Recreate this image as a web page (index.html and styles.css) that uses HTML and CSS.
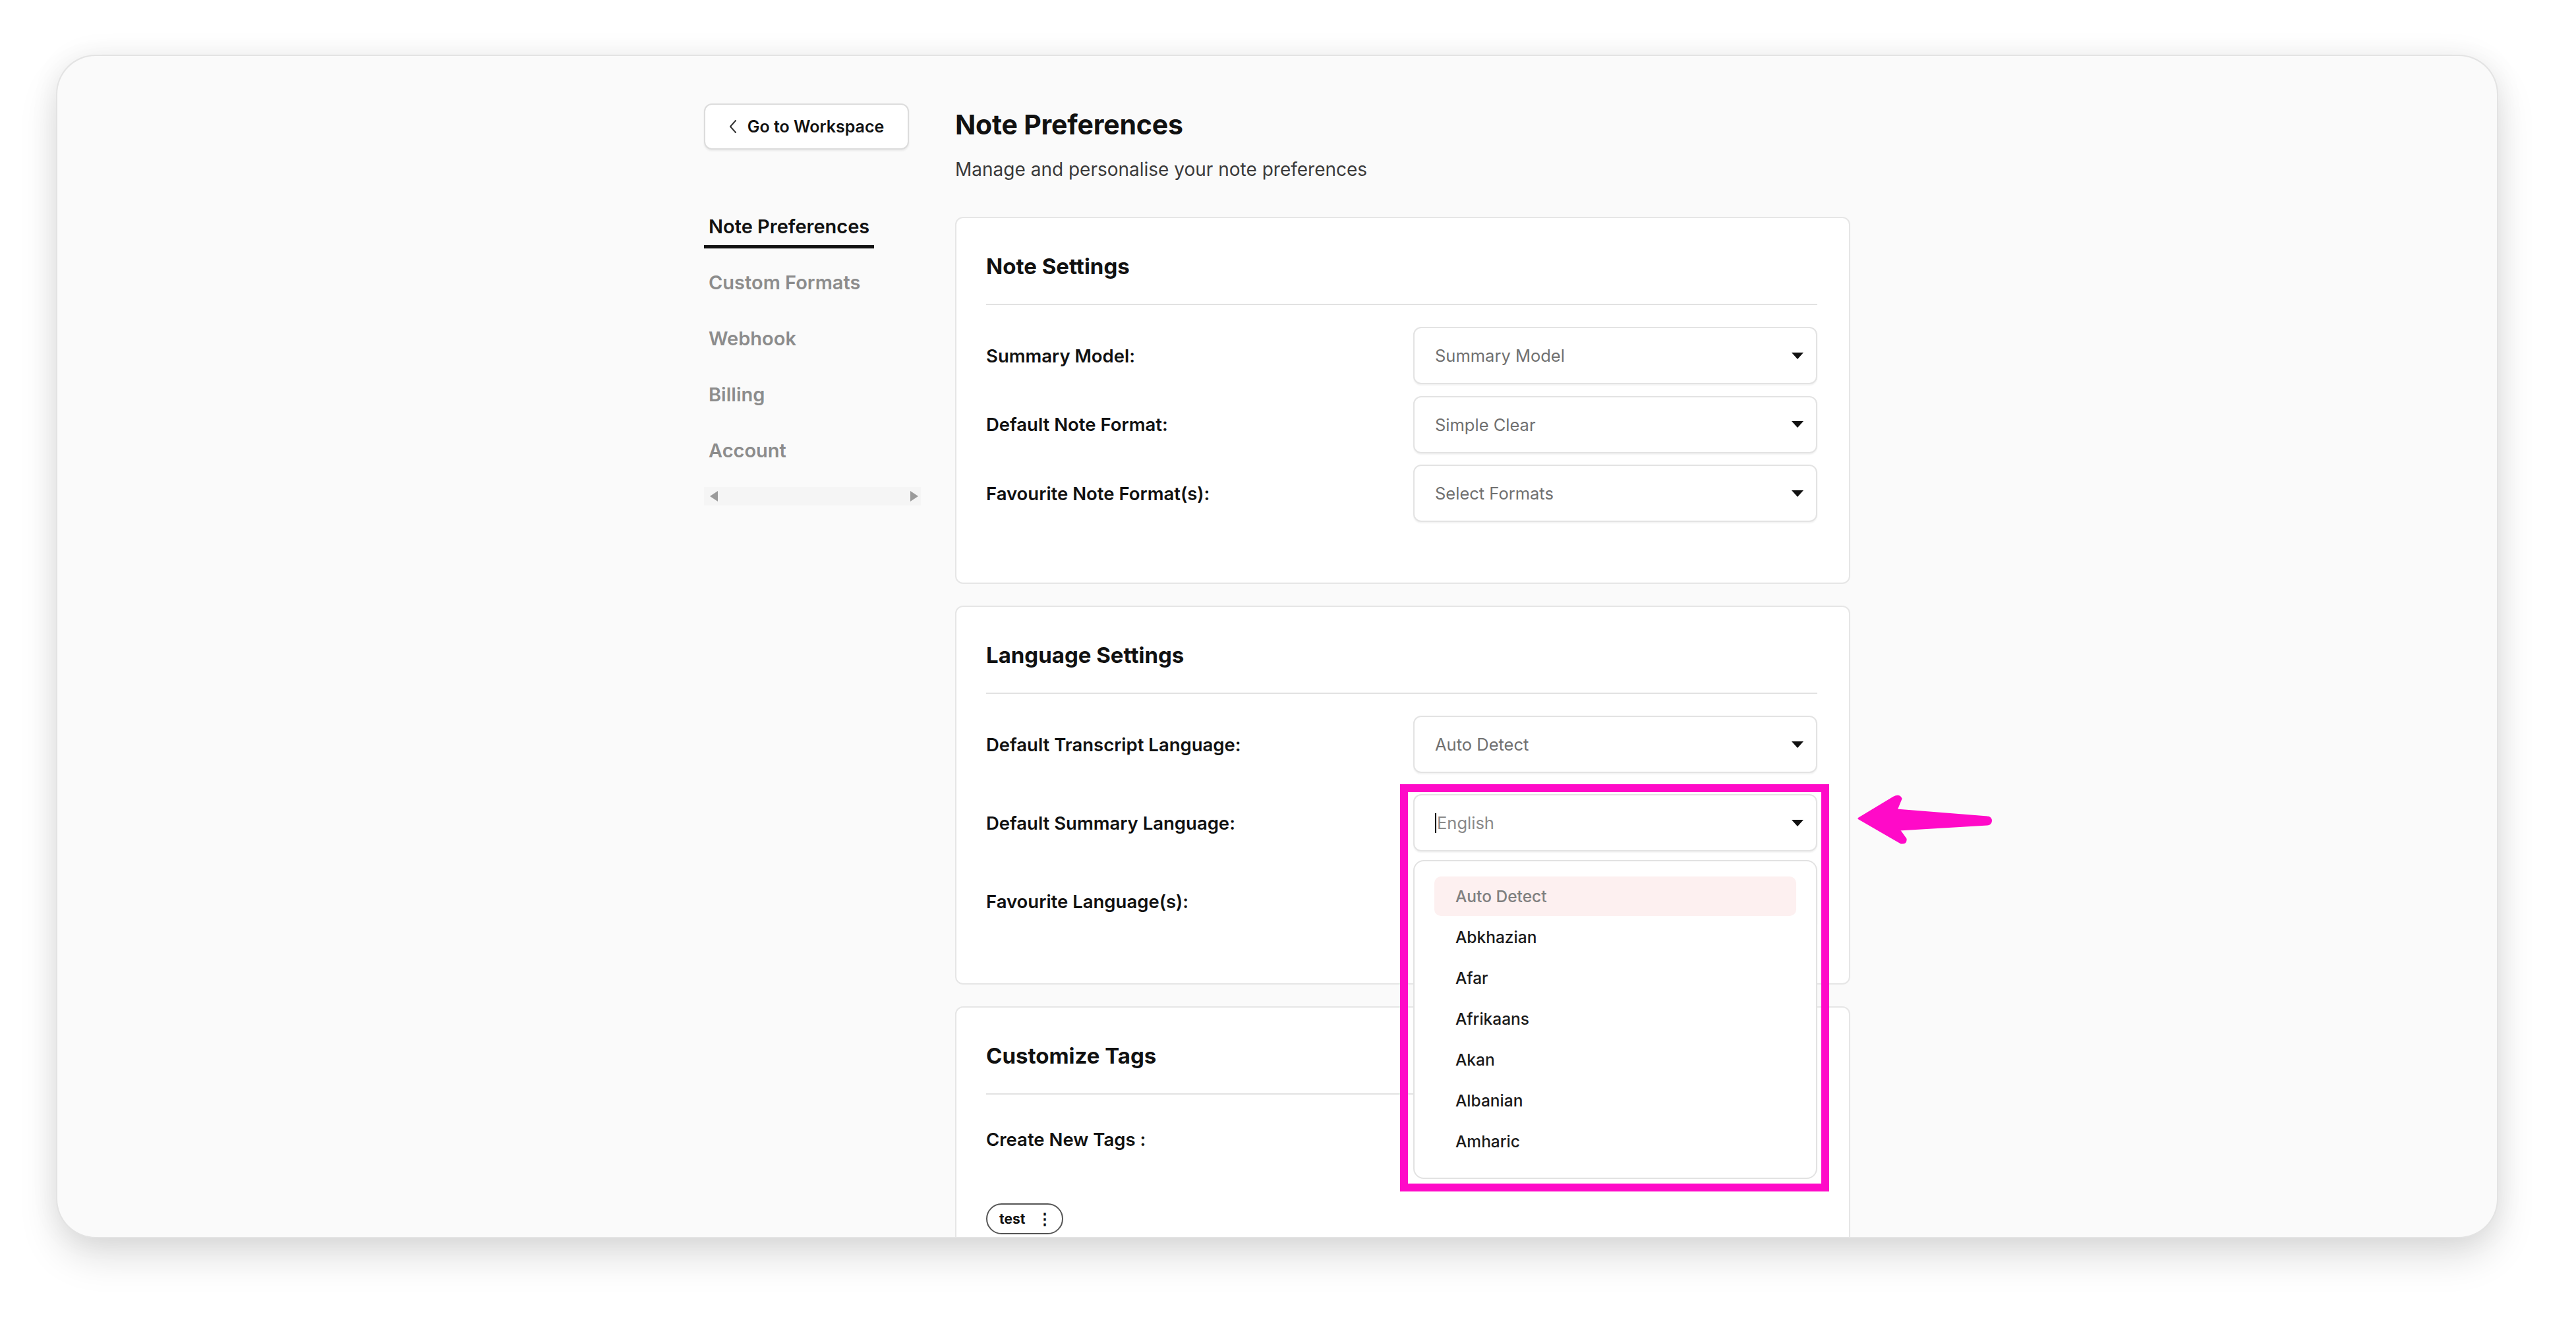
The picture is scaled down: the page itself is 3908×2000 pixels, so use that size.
FILE: index.html
```html
<!DOCTYPE html>
<html lang="en">
<head>
<meta charset="utf-8">
<title>Note Preferences</title>
<link rel="stylesheet" href="styles.css">
</head>
<body>
<div class="frame">
  <div class="app">
    <aside class="sidebar">
      <button class="back" type="button">
        <svg class="back-icon" viewBox="0 0 12 22" width="12" height="22"><polyline points="10,2 2,11 10,20" fill="none" stroke="#333" stroke-width="2" stroke-linecap="round" stroke-linejoin="round"/></svg>
        <span>Go to Workspace</span>
      </button>
      <nav class="nav">
        <a class="nav-item active">Note Preferences</a>
        <a class="nav-item">Custom Formats</a>
        <a class="nav-item">Webhook</a>
        <a class="nav-item">Billing</a>
        <a class="nav-item">Account</a>
      </nav>
      <div class="nav-scroll">
        <span class="tri tri-left"></span>
        <span class="tri tri-right"></span>
      </div>
    </aside>

    <main class="main">
      <h1 class="title">Note Preferences</h1>
      <p class="subtitle">Manage and personalise your note preferences</p>

      <section class="card card-notes">
        <h2 class="card-title">Note Settings</h2>
        <hr class="divider">
        <div class="rows rows-tight">
          <div class="row">
            <span class="label">Summary Model:</span>
            <div class="select-wrap"><div class="select"><span>Summary Model</span><span class="caret"></span></div></div>
          </div>
          <div class="row">
            <span class="label">Default Note Format:</span>
            <div class="select-wrap"><div class="select"><span>Simple Clear</span><span class="caret"></span></div></div>
          </div>
          <div class="row">
            <span class="label">Favourite Note Format(s):</span>
            <div class="select-wrap"><div class="select"><span>Select Formats</span><span class="caret"></span></div></div>
          </div>
        </div>
      </section>

      <section class="card card-lang">
        <h2 class="card-title">Language Settings</h2>
        <hr class="divider">
        <div class="rows rows-loose">
          <div class="row">
            <span class="label">Default Transcript Language:</span>
            <div class="select-wrap"><div class="select"><span>Auto Detect</span><span class="caret"></span></div></div>
          </div>
          <div class="row">
            <span class="label">Default Summary Language:</span>
            <div class="select-wrap">
              <div class="select select-open"><span><span class="cursor"></span>English</span><span class="caret"></span></div>
              <ul class="dropdown">
                <li class="opt opt-active">Auto Detect</li>
                <li class="opt">Abkhazian</li>
                <li class="opt">Afar</li>
                <li class="opt">Afrikaans</li>
                <li class="opt">Akan</li>
                <li class="opt">Albanian</li>
                <li class="opt">Amharic</li>
              </ul>
              <div class="highlight"></div>
              <svg class="pointer" viewBox="0 0 215 90" width="215" height="90">
                <path d="M7,43 L60,11 Q68,7 71,13 L64,30 L202,41 A5.5,5.5 0 0 1 202,52 L68,60 L78,74 Q79,81 71,80 Z" fill="#ff0ac8" stroke="#ff0ac8" stroke-width="3" stroke-linejoin="round"/>
              </svg>
            </div>
          </div>
          <div class="row">
            <span class="label">Favourite Language(s):</span>
            <div class="select-wrap"><div class="select"><span></span><span class="caret"></span></div></div>
          </div>
        </div>
      </section>

      <section class="card card-tags">
        <h2 class="card-title">Customize Tags</h2>
        <hr class="divider">
        <div class="tag-label">Create New Tags :</div>
        <div class="tags">
          <span class="tag"><span class="tag-text">test</span><span class="tag-more">&#8942;</span></span>
        </div>
      </section>
    </main>
  </div>
</div>
</body>
</html>
```

FILE: styles.css
```css
* {
  box-sizing: border-box;
}

html,
body {
  margin: 0;
  background: #ffffff;
}

body {
  width: 3908px;
  height: 2000px;
  overflow: hidden;
  padding: 85px 0 0 87px;
  font-family: Inter, "Liberation Sans", sans-serif;
  color: #111111;
}

.frame {
  width: 3701px;
  height: 1792px;
  background: #fafafa;
  border-radius: 58px;
  overflow: hidden;
  box-shadow: 0 0 0 2px #e3e3e3, 0 30px 60px rgba(0, 0, 0, 0.13), 0 0 45px rgba(0, 0, 0, 0.07);
}

.app {
  display: flex;
  justify-content: center;
  gap: 52px;
  padding-top: 72px;
}

/* Sidebar */
.sidebar {
  width: 329px;
  flex: none;
}

.back {
  display: flex;
  align-items: center;
  justify-content: center;
  gap: 16px;
  width: 311px;
  height: 70px;
  padding: 0;
  border: 2px solid #dcdcdc;
  border-radius: 12px;
  background: #ffffff;
  box-shadow: 0 2px 3px rgba(0, 0, 0, 0.07);
  font-family: Inter, "Liberation Sans", sans-serif;
  font-weight: 600;
  font-size: 25px;
  color: #111111;
}

.back-icon {
  display: block;
}

.nav {
  display: flex;
  flex-direction: column;
  align-items: flex-start;
  gap: 32px;
  margin-top: 97px;
}

.nav-item {
  padding: 0 7px 8px;
  line-height: 40px;
  border-bottom: 5px solid transparent;
  font-weight: 600;
  font-size: 29px;
  color: #8c8c8c;
}

.nav-item.active {
  color: #111111;
  border-bottom-color: #111111;
}

.nav-scroll {
  display: flex;
  justify-content: space-between;
  align-items: center;
  height: 28px;
  margin-top: 22px;
  padding: 0 4px 0 9px;
  background: #f5f5f5;
}

.tri {
  width: 0;
  height: 0;
  border-top: 8px solid transparent;
  border-bottom: 8px solid transparent;
}

.tri-left {
  border-right: 12px solid #9b9b9b;
}

.tri-right {
  border-left: 12px solid #9b9b9b;
}

/* Main */
.main {
  width: 1358px;
  flex: none;
  margin-top: 6px;
}

.title {
  margin: 0;
  font-size: 41px;
  line-height: 52px;
  font-weight: 700;
  letter-spacing: -0.2px;
}

.subtitle {
  margin: 24px 0 0;
  font-size: 28px;
  line-height: 36px;
  color: #3a3a3a;
}

.card {
  margin-top: 33px;
  background: #ffffff;
  border: 2px solid #e6e6e6;
  border-radius: 12px;
  padding: 52px 48px 92px 45px;
}

.card-notes {
  margin-top: 54px;
}

.card-lang {
  padding-bottom: 81px;
}

.card-tags {
  padding-bottom: 80px;
}

.card-title {
  margin: 0;
  font-size: 33px;
  line-height: 42px;
  font-weight: 700;
}

.divider {
  height: 2px;
  margin: 36px 0 0;
  border: none;
  background: #e2e2e2;
}

.rows {
  display: flex;
  flex-direction: column;
  margin-top: 33px;
}

.rows-tight {
  gap: 17.5px;
}

.rows-loose {
  gap: 32px;
}

.row {
  display: flex;
  align-items: center;
  justify-content: space-between;
}

.label {
  font-size: 27.5px;
  font-weight: 600;
  color: #111111;
}

.select-wrap {
  position: relative;
  width: 613px;
  flex: none;
}

.select {
  display: flex;
  align-items: center;
  justify-content: space-between;
  height: 87px;
  padding: 0 19px 0 31px;
  background: #ffffff;
  border: 2px solid #e3e3e3;
  border-radius: 12px;
  box-shadow: 0 2px 2px rgba(0, 0, 0, 0.05);
  font-size: 25.5px;
  color: #707070;
}

.select-open {
  color: #8a8a8a;
}

.cursor {
  display: inline-block;
  width: 2px;
  height: 30px;
  margin-right: 1px;
  background: #111111;
  vertical-align: -6px;
}

.caret {
  width: 0;
  height: 0;
  border-left: 9px solid transparent;
  border-right: 9px solid transparent;
  border-top: 10px solid #111111;
}

.dropdown {
  position: absolute;
  top: calc(100% + 13px);
  left: 0;
  z-index: 5;
  width: 613px;
  margin: 0;
  padding: 23px 30px 25px;
  list-style: none;
  display: flex;
  flex-direction: column;
  gap: 2px;
  background: #ffffff;
  border: 2px solid #e2e2e2;
  border-radius: 16px;
}

.opt {
  height: 60px;
  line-height: 60px;
  padding-left: 32px;
  border-radius: 10px;
  font-size: 24.5px;
  font-weight: 500;
  color: #1a1a1a;
}

.opt-active {
  background: #fdf0f0;
  color: #808080;
}

.highlight {
  position: absolute;
  left: -20px;
  top: -15px;
  z-index: 6;
  width: 651px;
  height: 618px;
  border: 12px solid #ff0ac8;
  pointer-events: none;
}

.pointer {
  position: absolute;
  left: 669px;
  top: -6px;
  z-index: 6;
}

/* Tags */
.tag-label {
  margin-top: 48px;
  line-height: 40px;
  font-size: 27.5px;
  font-weight: 600;
}

.tags {
  display: flex;
  margin-top: 77px;
}

.tag {
  display: inline-flex;
  align-items: center;
  gap: 18px;
  width: 117px;
  height: 47px;
  padding-left: 18px;
  border: 2px solid #555555;
  border-radius: 24px;
  font-size: 21px;
  font-weight: 700;
}

.tag-more {
  font-size: 24px;
  font-weight: 700;
}
```
